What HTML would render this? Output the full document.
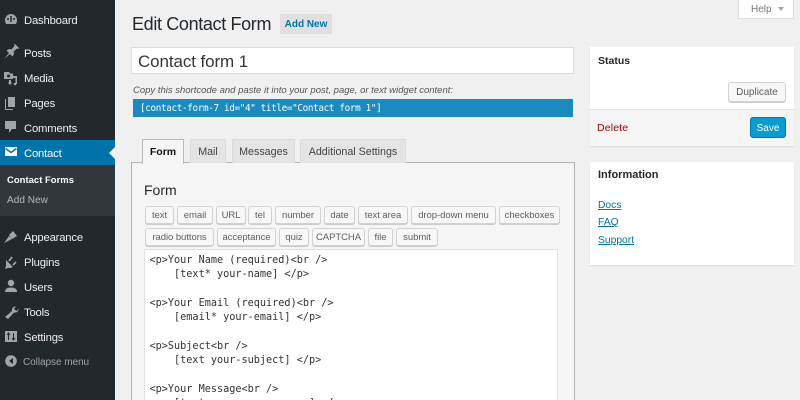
<!DOCTYPE html>
<html><head><meta charset="utf-8"><style>
html,body{margin:0;padding:0;width:800px;height:400px;overflow:hidden;background:#f0f0f0;font-family:"Liberation Sans",sans-serif}
body{position:relative}
.a{position:absolute;white-space:nowrap}
.m{position:absolute;left:24px;color:#eee;font-size:11.300px;line-height:18px;white-space:nowrap;letter-spacing:-.2px}
svg{position:absolute}
.b{position:absolute;height:18px;line-height:18px;box-sizing:border-box;border:1px solid #d2d2d2;border-radius:3px;background:#f7f7f7;color:#606060;font-size:9.500px;text-align:center;white-space:nowrap;box-shadow:0 1px 0 #ccc;letter-spacing:-.05px}
.t{position:absolute;top:139px;height:24px;box-sizing:border-box;border:1px solid #dcdcdc;border-bottom:none;background:#e4e4e4;color:#444;font-size:10.700px;line-height:24px;text-align:center;white-space:nowrap}
pre{position:absolute;margin:0;font-family:"DejaVu Sans Mono",monospace;white-space:pre}
</style></head><body>
<div class="a" style="left:0;top:0;width:115px;height:400px;background:#23282d"></div>
<div class="a" style="left:0;top:140px;width:115px;height:25px;background:#0073aa"></div>
<div class="a" style="left:0;top:165px;width:115px;height:51px;background:#32373c"></div>
<div class="a" style="left:109px;top:147px;width:0;height:0;border:6px solid transparent;border-left:0;border-right-color:#f1f1f1"></div>
<svg style="left:0;top:0" width="24" height="400" fill="#a0a5aa">
<path d="M11 14a6.200 6.200 0 0 0-6 6c0 1.300.4 2.700 1 4h10c.6-1.300 1-2.700 1-4a6.200 6.200 0 0 0-6-6z"/>
<circle cx="8" cy="19" r="1" fill="#23282d"/><circle cx="14" cy="19" r="1" fill="#23282d"/><path d="M11 16v6" stroke="#23282d" stroke-width="1.500"/>
<path d="M4 59l5-6-2.500-2.500 2.500-1.500 2.500.5 3-3.500-.5-1.500 1-.5 4 4-.5 1-1.500-.5-3.500 3 .5 2.500-1.500 2.500-2.500-2.500z"/>
<path d="M4 72h5l1 1.500h3V79H4z"/><circle cx="8.500" cy="76" r="1.500" fill="#23282d"/><path d="M9 80h2v3H9zM13 76h4v8h-1.500v-6H13z"/><circle cx="10" cy="83" r="1.500"/><circle cx="15" cy="84" r="1.300"/>
<path d="M8 97h7v10H8z"/><path d="M6 99v10h7v1H5V99z"/>
<path d="M5 121h11v8h-4l-3 4v-4H5z"/>
<rect x="5" y="147" width="12" height="9" fill="#fff"/><path d="M5.500 148.500l5.500 4 5.500-4" fill="none" stroke="#0073aa" stroke-width="1.500"/>
<path d="M4 243l5-7 3 3z"/><path d="M9 235l4-4 4 5-5 3z"/>
<path d="M6 260l7 7-3 1H8l-3 1 1-3v-3z"/><path d="M9 261l3-4M13 265l3-3" stroke="#a0a5aa" stroke-width="1.800"/>
<circle cx="11" cy="283" r="3.200"/><path d="M5 292c0-3 2-4.500 6-4.500s6 1.500 6 4.500z"/>
<path d="M5 316l7-6c-.5-2.500 1-4.500 4-4.500l-2 2.500 2.500 2 2-2c0 2.500-2 4-4.500 3.500l-6 6.500z" transform="translate(0 1)"/>
<rect x="5" y="331" width="12" height="11"/><path d="M8.500 333v7M13.500 333v7M7 335l1.500-2 1.500 2M12 338l1.500 2 1.500-2" stroke="#23282d" stroke-width="1" fill="none"/>
<circle cx="11" cy="361" r="5.800"/><path d="M13 358v6l-4-3z" fill="#23282d"/>
</svg>
<div class="m" style="top:12px">Dashboard</div>
<div class="m" style="top:45px">Posts</div>
<div class="m" style="top:70px">Media</div>
<div class="m" style="top:95px">Pages</div>
<div class="m" style="top:120px">Comments</div>
<div class="m" style="top:145px;color:#fff">Contact</div>
<div class="a" style="left:7px;top:174px;color:#fff;font-size:9.500px;font-weight:bold;line-height:14px">Contact Forms</div>
<div class="a" style="left:7px;top:194px;color:#b4b9be;font-size:10px;line-height:14px;letter-spacing:.05px">Add New</div>
<div class="m" style="top:229px">Appearance</div>
<div class="m" style="top:254px">Plugins</div>
<div class="m" style="top:279px">Users</div>
<div class="m" style="top:304px">Tools</div>
<div class="m" style="top:329px">Settings</div>
<div class="m" style="top:354px;left:23px;color:#a0a5aa;font-size:10px;letter-spacing:-.05px">Collapse menu</div>

<div class="a" style="left:132px;top:12px;font-size:18px;line-height:24px;color:#23282d;letter-spacing:-.35px">Edit Contact Form</div>
<div class="a" style="left:280px;top:14px;width:52px;height:20px;background:#e0e0e0;color:#0073aa;font-size:10px;font-weight:bold;line-height:22px;text-align:center">Add New</div>
<div class="a" style="left:738px;top:0;width:56px;height:19px;background:#fff;border:1px solid #ddd;border-top:none;box-sizing:border-box;color:#72777c;font-size:10px;line-height:20px;padding-left:12px">Help</div>
<div class="a" style="left:778px;top:7px;width:0;height:0;border:3px solid transparent;border-top:4px solid #a0a5aa;border-bottom:0"></div>

<div class="a" style="left:131px;top:47px;width:443px;height:27px;background:#fff;border:1px solid #ddd;box-sizing:border-box"></div>
<div class="a" style="left:138px;top:50px;font-size:17px;line-height:24px;color:#32373c;letter-spacing:-.1px">Contact form 1</div>
<div class="a" style="left:133px;top:84px;font-size:9.500px;font-style:italic;line-height:14px;color:#555">Copy this shortcode and paste it into your post, page, or text widget content:</div>
<div class="a" style="left:133px;top:99px;width:440px;height:18px;background:#1b8bbf"></div>
<pre style="left:140px;top:103px;font-size:9.300px;line-height:12px;color:#fff;letter-spacing:-.35px">[contact-form-7 id="4" title="Contact form 1"]</pre>

<div class="a" style="left:131px;top:162px;width:444px;height:238px;box-sizing:border-box;border:1px solid #b4b4b4;border-bottom:none;background:#f5f5f5"></div>
<div class="t" style="left:142px;width:42px;height:25px;background:#f5f5f5;color:#111;font-weight:bold;border-color:#bbb;font-size:10.500px">Form</div>
<div class="t" style="left:190px;width:36px">Mail</div>
<div class="t" style="left:232px;width:63px">Messages</div>
<div class="t" style="left:300px;width:106px">Additional Settings</div>
<div class="a" style="left:144px;top:181px;font-size:14px;line-height:18px;color:#23282d">Form</div>

<div class="b" style="left:145px;top:206px;width:29px">text</div>
<div class="b" style="left:177px;top:206px;width:36px">email</div>
<div class="b" style="left:216px;top:206px;width:30px">URL</div>
<div class="b" style="left:248px;top:206px;width:24px">tel</div>
<div class="b" style="left:275px;top:206px;width:46px">number</div>
<div class="b" style="left:324px;top:206px;width:31px">date</div>
<div class="b" style="left:358px;top:206px;width:50px">text area</div>
<div class="b" style="left:411px;top:206px;width:85px">drop-down menu</div>
<div class="b" style="left:499px;top:206px;width:61px">checkboxes</div>
<div class="b" style="left:145px;top:228px;width:69px">radio buttons</div>
<div class="b" style="left:217px;top:228px;width:59px">acceptance</div>
<div class="b" style="left:279px;top:228px;width:30px">quiz</div>
<div class="b" style="left:312px;top:228px;width:53px">CAPTCHA</div>
<div class="b" style="left:368px;top:228px;width:25px">file</div>
<div class="b" style="left:396px;top:228px;width:42px">submit</div>

<div class="a" style="left:144px;top:249px;width:414px;height:151px;background:#fff;border:1px solid #e2e2e2;border-bottom:none;box-sizing:border-box"></div>
<pre style="left:149.500px;top:254px;font-size:10.200px;line-height:14.350px;color:#333">&lt;p&gt;Your Name (required)&lt;br /&gt;
    [text* your-name] &lt;/p&gt;

&lt;p&gt;Your Email (required)&lt;br /&gt;
    [email* your-email] &lt;/p&gt;

&lt;p&gt;Subject&lt;br /&gt;
    [text your-subject] &lt;/p&gt;

&lt;p&gt;Your Message&lt;br /&gt;
    [textarea your-message] &lt;/p&gt;</pre>

<div class="a" style="left:590px;top:47px;width:204px;height:99px;background:#fff;box-shadow:0 1px 1px rgba(0,0,0,.08)"></div>
<div class="a" style="left:590px;top:109px;width:204px;height:37px;background:#f5f5f5;border-top:1px solid #e5e5e5;box-sizing:border-box"></div>
<div class="a" style="left:598px;top:54px;font-size:10.500px;font-weight:bold;line-height:15px;color:#23282d">Status</div>
<div class="b" style="left:728px;top:82px;width:58px;height:20px;line-height:20px;font-size:10px;letter-spacing:0">Duplicate</div>
<div class="a" style="left:597px;top:121px;font-size:10.500px;line-height:15px;color:#a00;letter-spacing:.15px">Delete</div>
<div class="a" style="left:750px;top:117px;width:36px;height:21px;background:#0a9bd0;border:1px solid #0079a8;border-radius:3px;box-sizing:border-box;color:#fff;font-size:10px;line-height:21px;text-align:center">Save</div>

<div class="a" style="left:590px;top:162px;width:204px;height:103px;background:#fff;box-shadow:0 1px 1px rgba(0,0,0,.08)"></div>
<div class="a" style="left:598px;top:168px;font-size:11px;font-weight:bold;line-height:15px;color:#23282d">Information</div>
<div class="a" style="left:598px;top:199px;font-size:10.300px;line-height:14px;color:#0073aa;text-decoration:underline">Docs</div>
<div class="a" style="left:598px;top:216px;font-size:10.300px;line-height:14px;color:#0073aa;text-decoration:underline">FAQ</div>
<div class="a" style="left:598px;top:234px;font-size:10.300px;line-height:14px;color:#0073aa;text-decoration:underline">Support</div>
</body></html>
